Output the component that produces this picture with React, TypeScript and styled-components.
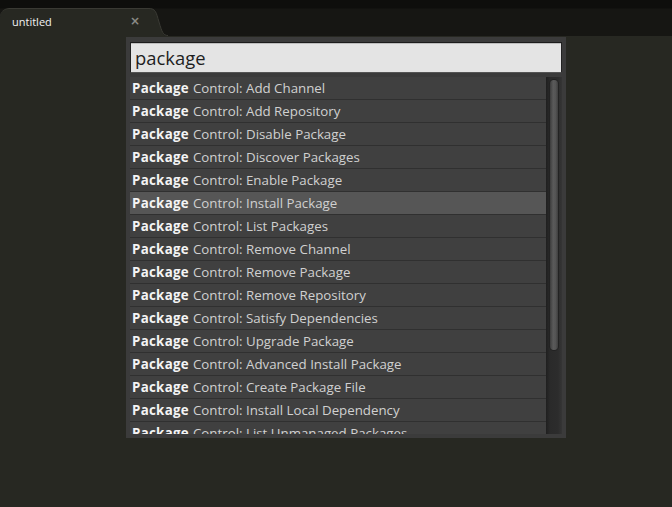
import React from "react";
import styled, { createGlobalStyle } from "styled-components";

const Global = createGlobalStyle`
  html, body { margin: 0; padding: 0; background: #272822; }
  body { width: 672px; height: 507px; overflow: hidden; font-family: "Open Sans", "Noto Sans", sans-serif; }
`;

const Window = styled.div`
  position: relative;
  width: 672px;
  height: 507px;
  display: flex;
  flex-direction: column;
  background: #272822;
`;

const TabBar = styled.div`
  height: 36px;
  flex: none;
  box-sizing: border-box;
  padding-top: 8px;
  background: linear-gradient(#0e0e0c 0, #0e0e0c 8px, #161613 9px, #161613 100%);
  display: flex;
  align-items: stretch;
`;

const Tab = styled.div`
  position: relative;
  width: 150px;
  background: #272822;
  border-top-left-radius: 9px;
  border-top: 1px solid #3a3a34;
  box-sizing: border-box;
  display: flex;
  align-items: center;
  justify-content: space-between;
  padding: 0 18px 3px 12px;
`;

const TabFlare = styled.svg`
  position: absolute;
  right: -18px;
  top: -1px;
  width: 20px;
  height: 28px;
`;

const TabTitle = styled.span`
  font-family: "Open Sans", "Noto Sans", sans-serif;
  font-size: 11px;
  color: #f2f2f2;
`;

const TabClose = styled.span`
  font-family: "DejaVu Sans", sans-serif;
  font-size: 12px;
  font-weight: bold;
  color: #8a8a86;
  margin-right: -8px;
`;

const Editor = styled.div`
  flex: 1;
  background: #272822;
`;

const Palette = styled.div`
  position: absolute;
  left: 126px;
  top: 37px;
  width: 440px;
  height: 401px;
  box-sizing: border-box;
  background: #3b3b3b;
  padding: 5px 4px 4px 4px;
  display: flex;
  flex-direction: column;
  gap: 4px;
`;

const SearchInput = styled.div`
  height: 31px;
  box-sizing: border-box;
  background: #e4e4e4;
  border: 1px solid #222;
  border-top-color: #1c1c1c;
  border-bottom-color: #555;
  box-shadow: inset 0 1px 0 #bdbdbd;
  padding: 0 4px;
  display: flex;
  align-items: center;
  font-family: "Open Sans", "Noto Sans", sans-serif;
  font-size: 18.4px;
  color: #1e1e1e;
`;

const ListWrap = styled.div`
  flex: 1;
  display: flex;
  min-height: 0;
`;

const List = styled.div`
  flex: 1;
  overflow: hidden;
  display: flex;
  flex-direction: column;
`;

const Row = styled.div<{ $active?: boolean }>`
  height: 23px;
  flex: none;
  box-sizing: border-box;
  background: ${(p) => (p.$active ? "#565656" : "#404040")};
  border-bottom: 1px solid #303030;
  padding-left: 2px;
  display: flex;
  align-items: center;
  white-space: nowrap;
  font-family: "Open Sans", "Noto Sans", sans-serif;
  font-size: 13.3px;
  color: #d0d0d0;
`;

const Match = styled.b`
  color: #f4f4f4;
  font-weight: 700;
  letter-spacing: 0.3px;
  margin-right: 4px;
`;

const Track = styled.div`
  width: 16px;
  flex: none;
  background: linear-gradient(90deg, #1f1f1f 0, #2a2a2a 4px, #2c2c2c 12px, #353535 100%);
  padding: 3px 4px 0 4px;
  box-sizing: border-box;
`;

const Thumb = styled.div`
  width: 8px;
  height: 270px;
  border-radius: 4px;
  background: linear-gradient(90deg, #3c3c3c, #5a5a5a 40%, #545454 70%, #3e3e3e);
  box-shadow: 0 0 0 1px #222;
`;

const items = [
  "Add Channel",
  "Add Repository",
  "Disable Package",
  "Discover Packages",
  "Enable Package",
  "Install Package",
  "List Packages",
  "Remove Channel",
  "Remove Package",
  "Remove Repository",
  "Satisfy Dependencies",
  "Upgrade Package",
  "Advanced Install Package",
  "Create Package File",
  "Install Local Dependency",
  "List Unmanaged Packages",
];

export default function App() {
  return (
    <Window>
      <Global />
      <TabBar>
        <Tab>
          <TabTitle>untitled</TabTitle>
          <TabClose>×</TabClose>
          <TabFlare viewBox="0 0 20 28" preserveAspectRatio="none">
            <path d="M0 0 C8 0 8 4 11 14 C14 24 15 28 20 28 L0 28 Z" fill="#272822" />
            <path d="M0 0.5 C8 0.5 8 4 11 14 C14 24 15 27.5 20 27.5" fill="none" stroke="#3a3a34" strokeWidth="1" />
          </TabFlare>
        </Tab>
      </TabBar>
      <Editor />
      <Palette>
        <SearchInput>package</SearchInput>
        <ListWrap>
          <List>
            {items.map((it, i) => (
              <Row key={it} $active={i === 5}>
                <Match>Package</Match>Control: {it}
              </Row>
            ))}
          </List>
          <Track>
            <Thumb />
          </Track>
        </ListWrap>
      </Palette>
    </Window>
  );
}
